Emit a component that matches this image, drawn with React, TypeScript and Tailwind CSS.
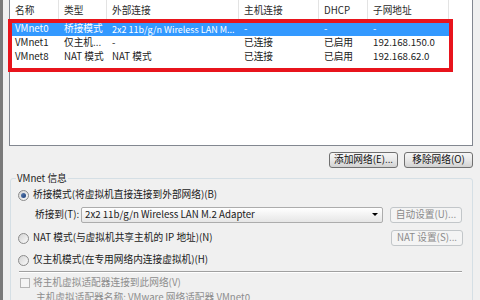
import React from 'react';

const cols = [
  { w: 'w-[49px]', title: '名称' },
  { w: 'w-[48px]', title: '类型' },
  { w: 'w-[132px]', title: '外部连接' },
  { w: 'w-[80px]', title: '主机连接' },
  { w: 'w-[49px]', title: 'DHCP' },
  { w: 'w-[81px]', title: '子网地址' },
];

const rows = [
  ['VMnet0', '桥接模式', '2x2 11b/g/n Wireless LAN M...', '-', '-', '-'],
  ['VMnet1', '仅主机...', '-', '已连接', '已启用', '192.168.150.0'],
  ['VMnet8', 'NAT 模式', 'NAT 模式', '已连接', '已启用', '192.168.62.0'],
];

function Radio({ checked }: { checked?: boolean }) {
  return (
    <div className="w-[11px] h-[11px] rounded-full border border-[#8b8b8b] bg-gradient-to-br from-[#d4d4d4] to-[#fafafa] flex items-center justify-center shrink-0">
      {checked && <div className="w-[5px] h-[5px] rounded-full bg-gradient-to-br from-[#5b7db0] to-[#1d3f7a]" />}
    </div>
  );
}

function Button({ label, disabled, w }: { label: string; disabled?: boolean; w: string }) {
  return (
    <div
      className={
        disabled
          ? `${w} h-[16px] rounded-[3px] border border-[#c2c6c9] bg-[#f4f4f4] text-[#8a8a8a] flex items-center justify-center whitespace-nowrap`
          : `${w} h-[16px] rounded-[3px] border border-[#707070] bg-gradient-to-b from-[#f6f6f6] via-[#e8e8e8] to-[#d2d2d2] text-[#111] flex items-center justify-center whitespace-nowrap`
      }
    >
      {label}
    </div>
  );
}

export default function App() {
  return (
    <div className="relative w-[480px] h-[300px] overflow-hidden bg-[#f0f0f0] border-l-[3px] border-[#7a7a7a] font-['Noto_Sans_CJK_SC',sans-serif] text-[9.7px] leading-none text-[#1a1a1a]">
      {/* network list */}
      <div className="ml-[6px] w-[464px] h-[146px] bg-white border border-t-0 border-[#828790]">
        <div className="flex h-[22px]">
          {cols.map((c) => (
            <div key={c.title} className={`${c.w} h-[20px] border-r border-[#e3e3e3] pl-[5px] pt-[6px] text-[#2b2b2b]`}>
              {c.title}
            </div>
          ))}
        </div>
        {rows.map((r, i) => (
          <div key={r[0]} className={i === 0 ? 'flex h-[14px] w-[439px] bg-[#3399ff] text-white' : 'flex h-[14px] w-[439px]'}>
            {r.map((cell, j) => (
              <div key={j} className={`${cols[j].w} pl-[5px] flex items-center whitespace-nowrap ${i === 0 && j === 2 ? 'text-[9px]' : ''}`}>
                {cell}
              </div>
            ))}
          </div>
        ))}
      </div>

      {/* red annotation */}
      <div className="absolute left-[5px] top-[19px] w-[445px] h-[53px] border-[4px] border-[#e8141c]" />

      {/* buttons */}
      <div className="flex justify-end gap-[6px] mt-[6px] w-[470px]">
        <Button label="添加网络(E)..." w="w-[69px]" />
        <Button label="移除网络(O)" w="w-[69px]" />
      </div>

      {/* VMnet info group */}
      <div className="relative ml-[7px] mt-[10px] w-[463px] h-[140px] rounded-[3px] border border-[#d5dfe5]">
        <div className="absolute left-[5px] top-[-7px] px-[1px] bg-[#f0f0f0] h-[13px] flex items-center">VMnet 信息</div>

        <div className="flex items-center gap-[4px] h-[14px] mt-[9px] pl-[7px]">
          <Radio checked />
          <span>桥接模式(将虚拟机直接连接到外部网络)(B)</span>
        </div>

        <div className="flex items-center h-[17px] mt-[4px] pl-[24px]">
          <span className="w-[46px] whitespace-nowrap">桥接到(T):</span>
          <div className="w-[302px] h-[16px] border border-[#acacac] rounded-[2px] bg-gradient-to-b from-[#ffffff] to-[#e6e6e6] flex items-center justify-between pl-[3px] pr-[4px]">
            <span>2x2 11b/g/n Wireless LAN M.2 Adapter</span>
            <div className="w-0 h-0 border-l-[3px] border-r-[3px] border-t-[3px] border-l-transparent border-r-transparent border-t-black" />
          </div>
          <div className="ml-[7px]">
            <Button label="自动设置(U)..." w="w-[72px]" disabled />
          </div>
        </div>

        <div className="flex items-center justify-between h-[16px] mt-[7px] pl-[7px] w-[452px]">
          <div className="flex items-center gap-[4px]">
            <Radio />
            <span>NAT 模式(与虚拟机共享主机的 IP 地址)(N)</span>
          </div>
          <Button label="NAT 设置(S)..." w="w-[72px]" disabled />
        </div>

        <div className="flex items-center gap-[4px] h-[14px] mt-[7px] pl-[7px]">
          <Radio />
          <span>仅主机模式(在专用网络内连接虚拟机)(H)</span>
        </div>

        <div className="ml-[8px] mt-[4px] w-[443px] h-[2px] border-t border-[#a0a0a0] border-b border-b-white" />

        <div className="flex items-center gap-[3px] h-[14px] mt-[3px] pl-[9px] text-[#8d8d8d]">
          <div className="w-[10px] h-[10px] border border-[#b5b5b5] bg-[#f4f4f4]" />
          <span>将主机虚拟适配器连接到此网络(V)</span>
        </div>

        <div className="h-[12px] mt-[2px] pl-[25px] flex items-center text-[#8d8d8d] whitespace-nowrap">
          主机虚拟适配器名称: VMware 网络适配器 VMnet0
        </div>
      </div>
    </div>
  );
}
